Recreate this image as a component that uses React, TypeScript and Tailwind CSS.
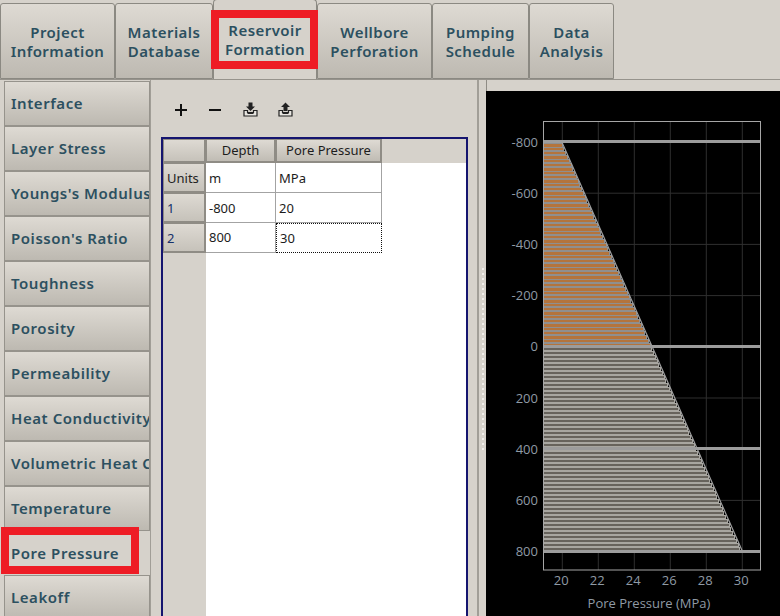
import React from 'react';

const topTabs = [
  { top: 'Project', bottom: 'Information', width: 'w-[115px]' },
  { top: 'Materials', bottom: 'Database', width: 'w-[98px]' },
  { top: 'Reservoir', bottom: 'Formation', width: 'w-[104px]', active: true },
  { top: 'Wellbore', bottom: 'Perforation', width: 'w-[115px]' },
  { top: 'Pumping', bottom: 'Schedule', width: 'w-[97px]' },
  { top: 'Data', bottom: 'Analysis', width: 'w-[85px]' },
];

const sideTabs = [
  'Interface',
  'Layer Stress',
  "Youngs's Modulus",
  "Poisson's Ratio",
  'Toughness',
  'Porosity',
  'Permeability',
  'Heat Conductivity',
  'Volumetric Heat Capacity',
  'Temperature',
  'Pore Pressure',
  'Leakoff',
];

const rows = [
  { head: 'Units', a: 'm', b: 'MPa', color: 'text-[#222]' },
  { head: '1', a: '-800', b: '20', color: 'text-[#15306a]' },
  { head: '2', a: '800', b: '30', color: 'text-[#15306a]', focus: true },
];

const yTicks = [-800, -600, -400, -200, 0, 200, 400, 600, 800];
const xTicks = [20, 22, 24, 26, 28, 30];
const splitterDots = Array.from({ length: 37 }, (_, i) => i);

const depthToY = (d: number) => 346.8 + (d / 800) * 204.8;
const pressureToX = (p: number) => 562.3 + (p - 20) * 18;

function TrayIcon({ up }: { up?: boolean }) {
  return (
    <svg width="15" height="15" viewBox="0 0 15 15">
      <path d="M1 8.500h3.500v2h6v-2H14v5.500H1z" fill="#e8e6e1" stroke="#222" strokeWidth="1.200" />
      <rect x="4.500" y="10.500" width="6" height="1.500" fill="#222" />
      {up ? (
        <path d="M7.500 0.500L12 5H9.500v4h-4V5H3z" fill="#222" />
      ) : (
        <path d="M5.500 0.500h4v4H12L7.500 9 3 4.500h2.500z" fill="#222" />
      )}
    </svg>
  );
}

function Toolbar() {
  return (
    <div className="flex h-[57px] items-center pl-[22px] pt-[2px] text-[#111]">
      <svg width="16" height="16" viewBox="0 0 16 16" className="mr-[18px]">
        <path d="M8 2v12M2 8h12" stroke="#111" strokeWidth="2" />
      </svg>
      <svg width="16" height="16" viewBox="0 0 16 16" className="mr-[20px]">
        <path d="M2 8h12" stroke="#111" strokeWidth="2" />
      </svg>
      <div className="mr-[20px] flex">
        <TrayIcon />
      </div>
      <div className="flex">
        <TrayIcon up />
      </div>
    </div>
  );
}

function PressureTable() {
  return (
    <div className="ml-[10px] h-[600px] w-[307px] border-2 border-[#15156f] bg-white text-[13px] text-[#1c1c1c]">
      <div className="flex h-[24px] bg-[#d6d2cb]">
        <div className="w-[43px] border border-b-2 border-r-2 border-[#8f8c85] bg-gradient-to-b from-[#dedad3] to-[#c6c2ba]" />
        <div className="flex w-[70px] items-center justify-center border border-b-2 border-r-2 border-[#8f8c85] bg-gradient-to-b from-[#dedad3] to-[#c0bcb4] pt-[1px]">
          Depth
        </div>
        <div className="flex w-[106px] items-center justify-center border border-b-2 border-r-2 border-[#8f8c85] bg-gradient-to-b from-[#dedad3] to-[#c0bcb4] pt-[1px]">
          Pore Pressure
        </div>
      </div>
      <div className="flex">
        <div className="flex h-[590px] w-[43px] flex-col bg-[#d6d2cb]">
          {rows.map((row) => (
            <div
              key={row.head}
              className={`flex h-[30px] items-center border border-b-2 border-r-2 border-[#8f8c85] bg-gradient-to-b from-[#dedad3] to-[#c6c2ba] pl-[3px] pt-[2px] ${row.color}`}
            >
              {row.head}
            </div>
          ))}
        </div>
        <div className="flex flex-col">
          {rows.map((row) => (
            <div key={row.head} className="flex h-[30px]">
              <div className={row.focus ? 'flex w-[70px] items-center border-b border-r border-[#a3a3a3] pl-[3px] pt-[1px]' : 'flex w-[70px] items-center border-b border-r border-[#a3a3a3] pl-[3px] pt-[2px]'}>{row.a}</div>
              <div
                className={
                  row.focus
                    ? 'flex w-[106px] items-center border border-dotted border-[#111] pl-[3px] pt-[1px]'
                    : 'flex w-[106px] items-center border-b border-r border-[#a3a3a3] pl-[3px] pt-[2px]'
                }
              >
                {row.b}
              </div>
            </div>
          ))}
        </div>
      </div>
    </div>
  );
}

function PressureChart() {
  const bars = Array.from({ length: 102 }, (_, i) => {
    const y = 143 + i * 4;
    const depth = ((y - 346.8) / 204.8) * 800;
    return { y, upper: depth < 0, thick: i % 3 === 0, x: Math.round(pressureToX(25 + depth / 160)) };
  });

  return (
    <svg viewBox="486 91 294 525" className="block h-[525px] w-[294px]" fontFamily="'Open Sans', sans-serif">
      {xTicks.map((t) => (
        <line key={t} x1={pressureToX(t)} x2={pressureToX(t)} y1={122} y2={570} stroke="#2f2f2f" />
      ))}
      {yTicks.map((t) => (
        <line key={t} x1={543} x2={761} y1={depthToY(t)} y2={depthToY(t)} stroke="#2f2f2f" />
      ))}
      <g shapeRendering="crispEdges">
        {bars.map((b) => (
          <g key={b.y}>
            <rect x={543} y={b.y} width={b.x - 543} height={4} fill={b.upper ? '#8f8f8f' : '#a8a6a0'} />
            <rect
              x={543}
              y={b.y + 1}
              width={b.x - 544}
              height={b.upper && b.thick ? 3 : 2}
              fill={b.upper ? '#b4743c' : '#67635c'}
            />
          </g>
        ))}
      </g>
      <line x1={562.3} y1={143} x2={742.3} y2={551} stroke="#a0a0a0" strokeWidth="1.200" />
      <g shapeRendering="crispEdges">
        {[-800, 0, 400, 800].map((t) => (
          <rect key={t} x={543} y={Math.round(depthToY(t)) - 2} width={218} height={3} fill="#9c9c9c" />
        ))}
      </g>
      <rect x={543.500} y={121.500} width={217} height={448.500} fill="none" stroke="#a6a6a6" />
      {yTicks.map((t) => (
        <text key={t} x={538} y={depthToY(t) + 4.500} textAnchor="end" fontSize="13" fill="#8f9aa5">
          {t}
        </text>
      ))}
      {xTicks.map((t) => (
        <text key={t} x={pressureToX(t) - 1} y={585} textAnchor="middle" fontSize="13" fill="#8f9aa5">
          {t}
        </text>
      ))}
      <text x={649} y={608} textAnchor="middle" fontSize="13" fill="#8f9aa5">
        Pore Pressure (MPa)
      </text>
    </svg>
  );
}

export default function App() {
  return (
    <div
      className="relative flex h-[616px] w-[780px] flex-col overflow-hidden bg-[#d6d2cb]"
      style={{ fontFamily: "'Noto Sans', 'Open Sans', sans-serif" }}
    >
      <div className="flex h-[80px] items-end border-b border-[#96938c]">
        {topTabs.map((tab) => (
          <div
            key={tab.top}
            className={
              tab.active
                ? `flex h-[80px] ${tab.width} flex-col items-center justify-center rounded-t-[4px] border border-b-0 border-[#8b8982] bg-[#d6d2cb] text-[15px] font-semibold leading-[19px] tracking-[0.45px] text-[#2c5060]`
                : `flex h-[76px] ${tab.width} flex-col items-center justify-center rounded-t-[3px] border border-[#8b8982] bg-gradient-to-b from-[#dedad3] to-[#bdb9b1] pt-[1px] text-[15px] font-semibold leading-[19px] tracking-[0.45px] text-[#2c5060]`
            }
          >
            <span>{tab.top}</span>
            <span>{tab.bottom}</span>
          </div>
        ))}
      </div>

      <div className="flex flex-1 overflow-hidden">
        <div className="ml-[4px] flex w-[146px] flex-col pt-[1px]">
          {sideTabs.map((label) => (
            <div
              key={label}
              className={
                label === 'Pore Pressure'
                  ? 'flex h-[44px] shrink-0 items-center overflow-hidden whitespace-nowrap bg-[#d6d2cb] pl-[7px] pt-[1px] text-[15px] font-semibold tracking-[0.55px] text-[#2c5060]'
                  : 'flex h-[45px] shrink-0 items-center overflow-hidden whitespace-nowrap border border-[#96938c] bg-gradient-to-b from-[#dedad3] to-[#bdb9b1] pl-[6px] text-[15px] font-semibold tracking-[0.55px] text-[#2c5060]'
              }
            >
              {label}
            </div>
          ))}
        </div>

        <div className="h-full w-[329px] border-l border-r-2 border-[#a19e97]">
          <Toolbar />
          <PressureTable />
        </div>

        <div className="flex w-[7px] flex-col items-center gap-[3px] pt-[188px]">
          {splitterDots.map((dot) => (
            <div key={dot} className="h-[2px] w-[2px] bg-[#f2f0ec]" />
          ))}
        </div>

        <div className="flex-1 border-l border-[#8f8c85] pt-[11px]">
          <div className="-ml-[1px] bg-black">
            <PressureChart />
          </div>
        </div>
      </div>

      {/* red annotation boxes drawn over the screenshot */}
      <div className="absolute left-[211px] top-[10px] h-[59px] w-[107px] border-[8px] border-[#ee1c25]" />
      <div className="absolute left-[1px] top-[527px] h-[47px] w-[138px] border-[8px] border-[#ee1c25]" />
    </div>
  );
}
